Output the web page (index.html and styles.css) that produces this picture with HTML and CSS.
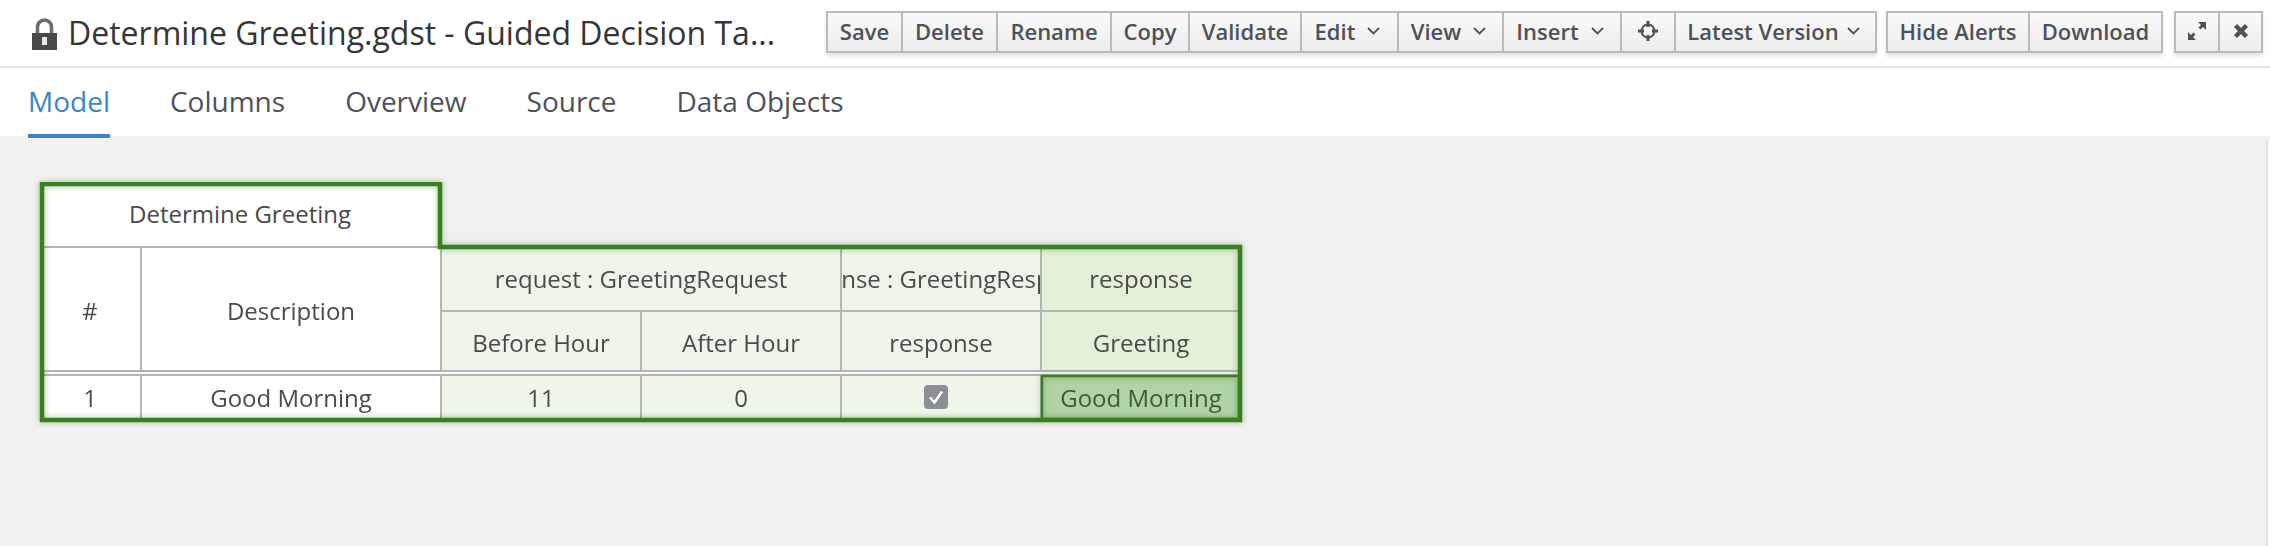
FILE: index.html
```html
<!DOCTYPE html>
<html lang="en">
<head>
  <meta charset="UTF-8" />
  <title>Determine Greeting.gdst</title>
  <link rel="stylesheet" href="styles.css">
</head>
<body>
  <header class="title-bar">
    <div class="title">
      <svg class="lock" viewBox="0 0 25 32" width="25" height="32">
        <path d="M5.500 15V9a7 7 0 0 1 14 0V15" fill="none" stroke="#6b6b6b" stroke-width="3.500"/>
        <rect x="0" y="15" width="25" height="17" fill="#4a4a4a"/>
        <rect x="10" y="19" width="5" height="8" fill="#e8e8e8"/>
      </svg>
      <span>Determine Greeting.gdst - Guided Decision Ta...</span>
    </div>
    <div class="toolbar">
      <div class="btn-group">
        <button class="btn-save">Save</button>
        <button class="btn-delete">Delete</button>
        <button class="btn-rename">Rename</button>
        <button class="btn-copy">Copy</button>
        <button class="btn-validate">Validate</button>
        <button class="btn-menu btn-edit">Edit <svg class="caret" viewBox="0 0 13 8" width="13" height="8"><path d="M1 1l5.500 5.500L12 1" fill="none" stroke="#4d5258" stroke-width="1.800"/></svg></button>
        <button class="btn-menu btn-view">View <svg class="caret" viewBox="0 0 13 8" width="13" height="8"><path d="M1 1l5.500 5.500L12 1" fill="none" stroke="#4d5258" stroke-width="1.800"/></svg></button>
        <button class="btn-menu btn-insert">Insert <svg class="caret" viewBox="0 0 13 8" width="13" height="8"><path d="M1 1l5.500 5.500L12 1" fill="none" stroke="#4d5258" stroke-width="1.800"/></svg></button>
        <button class="btn-target">
          <svg viewBox="0 0 20 20" width="20" height="20">
            <circle cx="10" cy="10" r="6.500" fill="none" stroke="#4d5258" stroke-width="2"/>
            <path d="M10 0v6M10 14v6M0 10h6M14 10h6" stroke="#4d5258" stroke-width="3"/>
          </svg>
        </button>
        <button class="btn-latest">Latest Version <svg class="caret" viewBox="0 0 13 8" width="13" height="8"><path d="M1 1l5.500 5.500L12 1" fill="none" stroke="#4d5258" stroke-width="1.800"/></svg></button>
      </div>
      <div class="btn-group">
        <button class="btn-alerts">Hide Alerts</button>
        <button class="btn-download">Download</button>
      </div>
      <div class="btn-group btn-group-end">
        <button class="btn-expand">
          <svg viewBox="0 0 20 20" width="20" height="20">
            <path d="M11 1h8v8l-3-3-2.500 2.500-2-2L14 4zM9 19H1v-8l3 3 2.500-2.500 2 2L6 16z" fill="#4d5258"/>
          </svg>
        </button>
        <button class="btn-close">
          <svg viewBox="0 0 16 16" width="16" height="16">
            <path d="M2.500 2.500l11 11M13.500 2.500l-11 11" stroke="#4d5258" stroke-width="4.500"/>
          </svg>
        </button>
      </div>
    </div>
  </header>

  <nav class="tabs">
    <a class="tab active">Model</a>
    <a class="tab">Columns</a>
    <a class="tab">Overview</a>
    <a class="tab">Source</a>
    <a class="tab">Data Objects</a>
  </nav>

  <div class="content">
    <main class="canvas">
      <div class="table-wrap">
        <div class="dtable">
          <div class="cell title-cell">Determine Greeting</div>

          <div class="cell head-id">#</div>
          <div class="cell head-desc">Description</div>
          <div class="cell green head-req">request : GreetingRequest</div>
          <div class="cell green head-res">response : GreetingResponse</div>
          <div class="cell light head-act">response</div>

          <div class="cell green sub">Before Hour</div>
          <div class="cell green sub">After Hour</div>
          <div class="cell green sub">response</div>
          <div class="cell light sub">Greeting</div>

          <div class="gap"></div>

          <div class="cell row row-first">1</div>
          <div class="cell row">Good Morning</div>
          <div class="cell green row">11</div>
          <div class="cell green row">0</div>
          <div class="cell green row">
            <svg class="check" viewBox="0 0 24 24" width="24" height="24">
              <rect width="24" height="24" rx="4" fill="#8e8e96"/>
              <path d="M6 12.500l4.500 5L18 6.500" fill="none" stroke="#fff" stroke-width="2.500"/>
            </svg>
          </div>
          <div class="cell row picked">Good Morning</div>
        </div>
        <svg class="outline" width="1212" height="248" viewBox="0 0 1212 248">
          <path d="M3 2H401V65H1201V238H3Z" fill="none" stroke="#35821f" stroke-width="4.500"/>
          <path d="M1003 194H1200V237H1003Z" fill="none" stroke="#35821f" stroke-width="2.500"/>
        </svg>
      </div>
    </main>
    <div class="scroll-edge"></div>
  </div>
</body>
</html>
```

FILE: styles.css
```css
* {
  box-sizing: border-box;
}
html, body {
  height: 100%;
}
body {
  margin: 0;
  background-color: #f1f1f1;
  color: #363636;
  font-family: "Open Sans", sans-serif;
  overflow: hidden;
  display: flex;
  flex-direction: column;
}
.title-bar {
  height: 68px;
  flex: none;
  background-color: #fff;
  border-bottom: 2px solid #e2e2e2;
  display: flex;
  justify-content: space-between;
  padding: 11px 7px 0 32px;
}
.title {
  display: flex;
  align-items: flex-start;
  gap: 11px;
  font-size: 32px;
  line-height: 44px;
  white-space: nowrap;
}
.lock {
  margin-top: 7px;
}

/* toolbar */
.toolbar {
  display: flex;
  gap: 9px;
  align-items: flex-start;
}
.btn-group {
  display: flex;
  height: 42px;
  border: 2px solid #bbb;
  box-shadow: 0 3px 4px rgba(0, 0, 0, 0.12);
}
.btn-group-end {
  margin-left: 2px;
}
.btn-group button {
  font-family: "Open Sans", sans-serif;
  font-size: 22px;
  font-weight: 600;
  color: #4d5258;
  background: linear-gradient(#fafafa, #ededed);
  border: none;
  border-left: 2px solid #bbb;
  padding: 0 0 2px;
  display: flex;
  align-items: center;
  justify-content: center;
  white-space: nowrap;
}
.btn-group button:first-child {
  border-left: none;
}
.btn-menu {
  gap: 12px;
}
.btn-latest {
  gap: 8px;
}
.caret {
  margin-right: 4px;
}
.btn-save { width: 73px; }
.btn-delete { width: 95px; }
.btn-rename { width: 114px; }
.btn-copy { width: 78px; }
.btn-validate { width: 112px; }
.btn-edit { width: 97px; }
.btn-view { width: 105px; }
.btn-insert { width: 118px; }
.btn-target { width: 54px; }
.btn-latest { width: 201px; }
.btn-alerts { width: 140px; }
.btn-download { width: 133px; }
.btn-expand { width: 42px; }
.btn-close { width: 43px; }

/* tabs */
.tabs {
  height: 68px;
  flex: none;
  background-color: #fff;
  display: flex;
  gap: 60px;
  padding-left: 28px;
}
.tab {
  font-size: 28px;
  line-height: 66px;
  height: 70px;
  color: #4d5258;
  position: relative;
}
.tab.active {
  color: #3a85c6;
  border-bottom: 4px solid #3a85c6;
}

/* decision table */
.content {
  flex: 1;
  display: flex;
}
.canvas {
  flex: 1;
  padding: 46px 0 0 39px;
}
.scroll-edge {
  width: 4px;
  margin-top: 4px;
  background-color: #fafafa;
  border-left: 2px solid #e2e2e2;
}
.table-wrap {
  position: relative;
  width: 1212px;
  filter: blur(0.6px);
}
.dtable {
  display: grid;
  grid-template-columns: 100px 300px 200px 200px 200px 200px;
  grid-template-rows: 66px 64px 60px 4px 44px;
  font-size: 24px;
  color: #4a4a4a;
  margin-left: 1px;
}
.cell {
  display: flex;
  align-items: center;
  justify-content: center;
  background-color: #fff;
  white-space: nowrap;
  overflow: hidden;
  border-left: 2px solid #b5b5b5;
}
.title-cell {
  grid-column: 1 / 3;
  grid-row: 1;
  border-left: none;
  border-bottom: 2px solid #b5b5b5;
  padding-bottom: 2px;
}
.head-id {
  grid-column: 1;
  grid-row: 2 / 4;
  border-left: none;
  border-bottom: 2px solid #b5b5b5;
  padding-top: 2px;
}
.head-desc {
  grid-column: 2;
  grid-row: 2 / 4;
  border-bottom: 2px solid #b5b5b5;
  padding-top: 2px;
}
.head-req {
  grid-column: 3 / 5;
  grid-row: 2;
  border-bottom: 2px solid #b5b5b5;
  padding-bottom: 2px;
}
.head-res {
  grid-column: 5;
  grid-row: 2;
  border-bottom: 2px solid #b5b5b5;
  padding-bottom: 2px;
}
.head-act {
  grid-column: 6;
  grid-row: 2;
  border-bottom: 2px solid #b5b5b5;
  padding-bottom: 2px;
}
.green {
  background-color: #f0f5e9;
}
.light {
  background-color: #e3f1d8;
}
.sub {
  grid-row: 3;
  border-bottom: 2px solid #b5b5b5;
  padding-top: 2px;
}
.gap {
  grid-column: 1 / 7;
  grid-row: 4;
  background-color: #fafafa;
}
.row {
  grid-row: 5;
  border-top: 2px solid #b5b5b5;
  margin-top: -2px;
  padding-bottom: 2px;
}
.row-first {
  border-left: none;
}
.check {
  margin-right: 10px;
}
.picked {
  background-color: #b0d4a2;
  color: #3f5a38;
}
.outline {
  position: absolute;
  left: 0;
  top: 0;
  filter: drop-shadow(0 0 3px rgba(40, 90, 30, 0.4));
  pointer-events: none;
}
```
